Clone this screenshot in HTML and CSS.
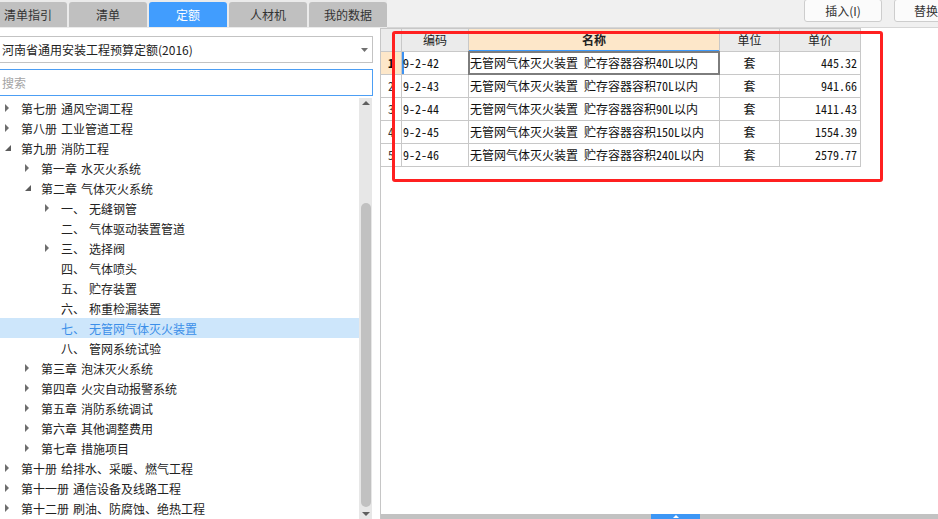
FILE: index.html
```html
<!DOCTYPE html>
<html lang="zh-CN">
<head>
<meta charset="utf-8">
<title>定额</title>
<link rel="stylesheet" href="styles.css">
</head>
<body>
<div class="app">
  <div class="top">
    <div class="tabs">
      <div class="tab first">清单指引</div>
      <div class="tab">清单</div>
      <div class="tab active">定额</div>
      <div class="tab">人材机</div>
      <div class="tab">我的数据</div>
    </div>
    <div class="toolbar">
      <div class="btn">插入(I)</div>
      <div class="btn btn-cut">替换</div>
    </div>
  </div>
  <div class="main">
    <div class="left">
      <div class="select">
        <span>河南省通用安装工程预算定额(2016)</span>
        <svg class="caret" width="7" height="4" viewBox="0 0 7 4"><path d="M0 0H7L3.5 4Z" fill="#707070"/></svg>
      </div>
      <div class="search"><span class="ph">搜索</span></div>
      <div class="treewrap">
        <div class="tree">
          <div class="row l0"><span class="tw"><svg width="4" height="8" viewBox="0 0 4 8"><path d="M0 0L4 4L0 8Z" fill="#6e6e6e"/></svg></span>第七册 通风空调工程</div>
          <div class="row l0"><span class="tw"><svg width="4" height="8" viewBox="0 0 4 8"><path d="M0 0L4 4L0 8Z" fill="#6e6e6e"/></svg></span>第八册 工业管道工程</div>
          <div class="row l0"><span class="tw"><svg class="ex" width="6" height="6" viewBox="0 0 6 6"><path d="M6 0V6H0Z" fill="#5c5c5c"/></svg></span>第九册 消防工程</div>
          <div class="row l1"><span class="tw"><svg width="4" height="8" viewBox="0 0 4 8"><path d="M0 0L4 4L0 8Z" fill="#6e6e6e"/></svg></span>第一章 水灭火系统</div>
          <div class="row l1"><span class="tw"><svg class="ex" width="6" height="6" viewBox="0 0 6 6"><path d="M6 0V6H0Z" fill="#5c5c5c"/></svg></span>第二章 气体灭火系统</div>
          <div class="row l2"><span class="tw"><svg width="4" height="8" viewBox="0 0 4 8"><path d="M0 0L4 4L0 8Z" fill="#6e6e6e"/></svg></span><span class="num">一、</span>无缝钢管</div>
          <div class="row l2"><span class="tw"></span><span class="num">二、</span>气体驱动装置管道</div>
          <div class="row l2"><span class="tw"><svg width="4" height="8" viewBox="0 0 4 8"><path d="M0 0L4 4L0 8Z" fill="#6e6e6e"/></svg></span><span class="num">三、</span>选择阀</div>
          <div class="row l2"><span class="tw"></span><span class="num">四、</span>气体喷头</div>
          <div class="row l2"><span class="tw"></span><span class="num">五、</span>贮存装置</div>
          <div class="row l2"><span class="tw"></span><span class="num">六、</span>称重检漏装置</div>
          <div class="row l2 sel"><span class="tw"></span><span class="num">七、</span>无管网气体灭火装置</div>
          <div class="row l2"><span class="tw"></span><span class="num">八、</span>管网系统试验</div>
          <div class="row l1"><span class="tw"><svg width="4" height="8" viewBox="0 0 4 8"><path d="M0 0L4 4L0 8Z" fill="#6e6e6e"/></svg></span>第三章 泡沫灭火系统</div>
          <div class="row l1"><span class="tw"><svg width="4" height="8" viewBox="0 0 4 8"><path d="M0 0L4 4L0 8Z" fill="#6e6e6e"/></svg></span>第四章 火灾自动报警系统</div>
          <div class="row l1"><span class="tw"><svg width="4" height="8" viewBox="0 0 4 8"><path d="M0 0L4 4L0 8Z" fill="#6e6e6e"/></svg></span>第五章 消防系统调试</div>
          <div class="row l1"><span class="tw"><svg width="4" height="8" viewBox="0 0 4 8"><path d="M0 0L4 4L0 8Z" fill="#6e6e6e"/></svg></span>第六章 其他调整费用</div>
          <div class="row l1"><span class="tw"><svg width="4" height="8" viewBox="0 0 4 8"><path d="M0 0L4 4L0 8Z" fill="#6e6e6e"/></svg></span>第七章 措施项目</div>
          <div class="row l0"><span class="tw"><svg width="4" height="8" viewBox="0 0 4 8"><path d="M0 0L4 4L0 8Z" fill="#6e6e6e"/></svg></span>第十册 给排水、采暖、燃气工程</div>
          <div class="row l0"><span class="tw"><svg width="4" height="8" viewBox="0 0 4 8"><path d="M0 0L4 4L0 8Z" fill="#6e6e6e"/></svg></span>第十一册 通信设备及线路工程</div>
          <div class="row l0"><span class="tw"><svg width="4" height="8" viewBox="0 0 4 8"><path d="M0 0L4 4L0 8Z" fill="#6e6e6e"/></svg></span>第十二册 刷油、防腐蚀、绝热工程</div>
        </div>
        <div class="vbar">
          <svg class="arr" width="8" height="4" viewBox="0 0 8 4"><path d="M0 4L4 0L8 4Z" fill="#5f5f5f"/></svg>
          <div class="thumb"></div>
          <svg class="arr down" width="8" height="4" viewBox="0 0 8 4"><path d="M0 0L4 4L8 0Z" fill="#5f5f5f"/></svg>
        </div>
      </div>
    </div>
    <div class="right">
      <div class="grid">
        <div class="c h"></div>
        <div class="c h">编码</div>
        <div class="c h act">名称</div>
        <div class="c h">单位</div>
        <div class="c h">单价</div>

        <div class="c rh cur">1</div>
        <div class="c code cur">9-2-42</div>
        <div class="c name focus">无管网气体灭火装置 贮存容器容积40L以内</div>
        <div class="c unit">套</div>
        <div class="c price">445.32</div>

        <div class="c rh">2</div>
        <div class="c code">9-2-43</div>
        <div class="c name">无管网气体灭火装置 贮存容器容积70L以内</div>
        <div class="c unit">套</div>
        <div class="c price">941.66</div>

        <div class="c rh">3</div>
        <div class="c code">9-2-44</div>
        <div class="c name">无管网气体灭火装置 贮存容器容积90L以内</div>
        <div class="c unit">套</div>
        <div class="c price">1411.43</div>

        <div class="c rh">4</div>
        <div class="c code">9-2-45</div>
        <div class="c name">无管网气体灭火装置 贮存容器容积150L以内</div>
        <div class="c unit">套</div>
        <div class="c price">1554.39</div>

        <div class="c rh">5</div>
        <div class="c code">9-2-46</div>
        <div class="c name">无管网气体灭火装置 贮存容器容积240L以内</div>
        <div class="c unit">套</div>
        <div class="c price">2579.77</div>
      </div>
      <div class="hbar">
        <div class="hthumb"><svg width="6" height="3" viewBox="0 0 6 3"><path d="M0 3L3 0L6 3Z" fill="#ffffff"/></svg></div>
      </div>
      <div class="mark"></div>
    </div>
  </div>
</div>
</body>
</html>
```

FILE: styles.css
```css
* { box-sizing: border-box; }
html, body {
  margin: 0;
  padding: 0;
  width: 938px;
  height: 519px;
  overflow: hidden;
  background: #ffffff;
  font-family: "Noto Sans CJK SC", "Noto Sans", sans-serif;
  font-size: 12px;
  color: #222222;
}
.app {
  display: flex;
  flex-direction: column;
  width: 938px;
  height: 519px;
}
.top {
  display: flex;
  height: 28px;
  flex: none;
}
.tabs {
  width: 387px;
  display: flex;
  gap: 2px;
  padding-top: 2px;
  background: #ebebeb;
  overflow: hidden;
  flex: none;
}
.tab {
  width: 78px;
  height: 25px;
  flex: none;
  background: #c0c0c0;
  border-radius: 3px 3px 0 0;
  text-align: center;
  line-height: 25px;
  color: #333333;
  font-size: 12px;
}
.tab.first { margin-left: -11px; }
.tab.active {
  background: #419dfe;
  color: #ffffff;
}
.toolbar {
  flex: 1;
  display: flex;
  gap: 12px;
  padding-left: 417px;
  background: #f0f0f0;
  border-bottom: 1px solid #d6d6d6;
  overflow: hidden;
}
.btn {
  width: 78px;
  height: 23px;
  flex: none;
  margin-top: -1px;
  border: 1px solid #cdcdcd;
  border-radius: 3px;
  background: #fbfbfb;
  text-align: center;
  line-height: 21px;
  color: #333333;
}
.btn-cut {
  text-align: left;
  padding-left: 19px;
}
.main {
  display: flex;
  flex: 1;
  min-height: 0;
}
.left {
  width: 380px;
  flex: none;
  padding-top: 8px;
  display: flex;
  flex-direction: column;
  background: #ffffff;
}
.select, .search {
  margin-left: -1px;
  width: 374px;
  height: 27px;
  flex: none;
  border: 1px solid #c3c3c3;
  display: flex;
  align-items: center;
  padding-left: 2px;
}
.select span { color: #222222; }
.caret {
  margin-left: auto;
  margin-right: 4px;
}
.search {
  margin-top: 6px;
  border-color: #4c9ef4;
}
.ph { color: #a4a4a4; }
.treewrap {
  margin-top: 2px;
  flex: 1;
  min-height: 0;
  display: flex;
}
.tree {
  width: 359px;
  flex: none;
}
.row {
  height: 20px;
  display: flex;
  align-items: center;
  white-space: nowrap;
  word-spacing: 1.3px;
  color: #222222;
}
.row.l1 { padding-left: 20px; }
.row.l2 { padding-left: 40px; }
.tw {
  width: 21px;
  height: 20px;
  flex: none;
  display: flex;
  align-items: center;
  padding-left: 5px;
}
.tw svg { display: block; }
.num {
  width: 28px;
  flex: none;
}
.row.sel {
  background: #cde6fb;
  color: #3b8fe9;
}
.vbar {
  width: 13px;
  flex: none;
  background: #e7e7e7;
  padding-top: 3px;
}
.arr {
  display: block;
  margin-left: 3px;
}
.thumb {
  margin-top: 98px;
  margin-left: 2px;
  width: 10px;
  height: 304px;
  border-radius: 5px;
  background: #c1c1c1;
}
.arr.down { margin-top: 5px; }
.right {
  flex: 1;
  position: relative;
  display: flex;
  flex-direction: column;
  border-left: 1px solid #c6c6c6;
  background: #ffffff;
}
.grid {
  display: grid;
  grid-template-columns: 20px 66px 250px 59px 80px;
  grid-auto-rows: 22px;
  gap: 1px;
  padding: 1px 1px 1px 0;
  background: #c8c8c8;
  width: max-content;
}
.c {
  background: #ffffff;
  line-height: 22px;
  white-space: nowrap;
  overflow: hidden;
  font-family: "Noto Sans Mono CJK SC", "Noto Sans CJK SC", "Liberation Mono", monospace;
  font-size: 12px;
  color: #111111;
}
.h {
  background: #ebebeb;
  text-align: center;
  font-family: "Noto Sans CJK SC", "Noto Sans", sans-serif;
  color: #222222;
}
.h.act {
  background: #fde7c9;
  font-weight: bold;
  box-shadow: inset 0 -1px 0 #3d9bfd;
}
.rh {
  text-align: center;
  color: #333333;
}
.rh.cur {
  background: #fde7c9;
  font-weight: bold;
  color: #111111;
}
.code { padding-left: 1px; }
.code.cur { box-shadow: inset 2px 0 0 #3d92f2; }
.name { padding-left: 1px; }
.name.focus {
  position: relative;
  z-index: 1;
  overflow: visible;
  box-shadow: 0 0 0 1px #7d7d7d, inset 0 0 0 1px #7d7d7d;
}
.unit { text-align: center; }
.price {
  text-align: right;
  padding-right: 3px;
}
.hbar {
  margin-top: auto;
  height: 5px;
  flex: none;
  background: #c2c2c2;
}
.hthumb {
  margin-left: 270px;
  width: 49px;
  height: 5px;
  background: #3d97f5;
  display: flex;
  justify-content: center;
  padding-top: 1px;
}
.hthumb svg { display: block; }
.mark {
  position: absolute;
  left: 11px;
  top: 3px;
  width: 491px;
  height: 151px;
  border: 3px solid #ff2020;
  border-radius: 3px;
  pointer-events: none;
}
```
